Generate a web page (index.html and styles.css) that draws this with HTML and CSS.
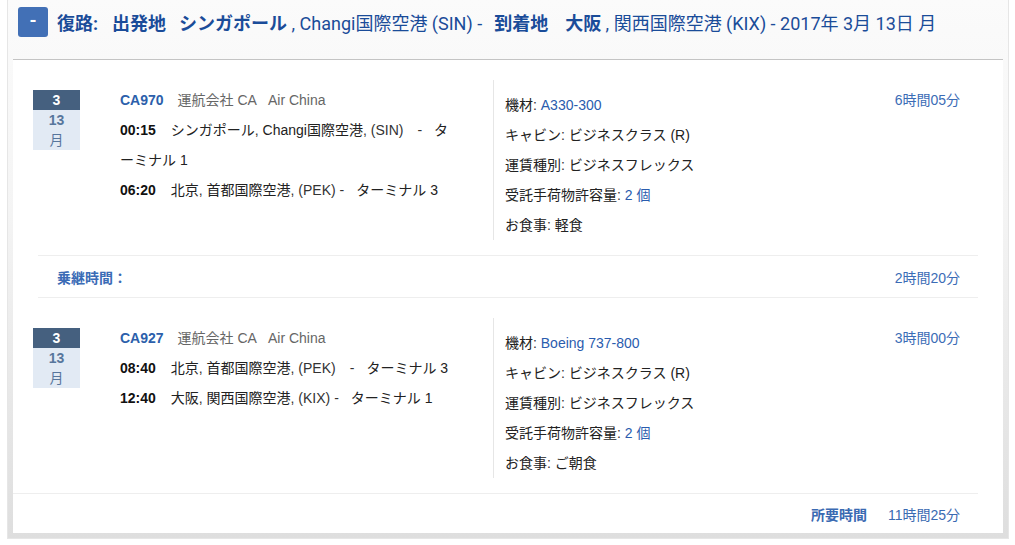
FILE: index.html
```html
<!DOCTYPE html>
<html lang="ja">
<head>
<meta charset="utf-8">
<title>復路</title>
<link rel="stylesheet" href="styles.css">
</head>
<body>
<div class="panel">
  <div class="panel-head">
    <span class="toggle">-</span>
    <h2 class="route"><b class="gap-l">復路:</b><b class="gap-m">出発地</b><b>シンガポール</b> , Changi国際空港 (SIN) -<b class="gap-s">到着地</b><b>大阪</b> , 関西国際空港 (KIX) - 2017年 3月 13日 月</h2>
  </div>
  <div class="panel-body">
    <div class="flight">
      <div class="date"><div class="date-month">3</div><div class="date-day"><b>13</b><br>月</div></div>
      <div class="info">
        <div class="line"><span class="fno">CA970</span><span class="carrier">運航会社 CA</span><span class="carrier">Air China</span></div>
        <div class="line"><span class="time">00:15</span>シンガポール<span class="sep">,</span> Changi国際空港<span class="sep">, (SIN)</span><span class="dash">-</span>ターミナル 1</div>
        <div class="line"><span class="time">06:20</span>北京<span class="sep">,</span> 首都国際空港<span class="sep">, (PEK) -</span><span class="dash-s"></span>ターミナル 3</div>
      </div>
      <div class="details">
        <ul class="specs">
          <li>機材<span class="sep">:</span> <span class="val">A330-300</span></li>
          <li>キャビン<span class="sep">:</span> ビジネスクラス (R)</li>
          <li>運賃種別<span class="sep">:</span> ビジネスフレックス</li>
          <li>受託手荷物許容量<span class="sep">:</span> <span class="val">2 個</span></li>
          <li>お食事<span class="sep">:</span> 軽食</li>
        </ul>
        <div class="dur">6時間05分</div>
      </div>
    </div>

    <div class="layover">
      <span class="layover-label">乗継時間：</span>
      <span class="layover-time">2時間20分</span>
    </div>

    <div class="flight flight-next">
      <div class="date"><div class="date-month">3</div><div class="date-day"><b>13</b><br>月</div></div>
      <div class="info">
        <div class="line"><span class="fno">CA927</span><span class="carrier">運航会社 CA</span><span class="carrier">Air China</span></div>
        <div class="line"><span class="time">08:40</span>北京<span class="sep">,</span> 首都国際空港<span class="sep">, (PEK)</span><span class="dash">-</span>ターミナル 3</div>
        <div class="line"><span class="time">12:40</span>大阪<span class="sep">,</span> 関西国際空港<span class="sep">, (KIX) -</span><span class="dash-s"></span>ターミナル 1</div>
      </div>
      <div class="details">
        <ul class="specs">
          <li>機材<span class="sep">:</span> <span class="val">Boeing 737-800</span></li>
          <li>キャビン<span class="sep">:</span> ビジネスクラス (R)</li>
          <li>運賃種別<span class="sep">:</span> ビジネスフレックス</li>
          <li>受託手荷物許容量<span class="sep">:</span> <span class="val">2 個</span></li>
          <li>お食事<span class="sep">:</span> ご朝食</li>
        </ul>
        <div class="dur">3時間00分</div>
      </div>
    </div>

    <div class="total">
      <span class="total-label">所要時間</span>
      <span class="total-time">11時間25分</span>
    </div>
  </div>
</div>
</body>
</html>
```

FILE: styles.css
```css
html, body {
  margin: 0;
  padding: 0;
  background: #ffffff;
}

body {
  font-family: "Liberation Sans", "Noto Sans CJK JP", sans-serif;
  color: #222222;
}

.panel {
  margin: 0 6px 0 7px;
  border: 1px solid #e6e6e6;
  border-top: none;
  padding: 0 5px 5px;
  background: linear-gradient(to bottom, #fbfbfb 0%, #f4f4f4 40%, #dedede 100%);
}

.panel-head {
  display: flex;
  align-items: center;
  height: 59px;
  padding: 0 0 15px 5px;
  box-sizing: border-box;
}

.toggle {
  flex: none;
  width: 30px;
  height: 30px;
  border-radius: 3px;
  background: #4270b6;
  color: #ffffff;
  font-family: "Roboto", "Liberation Sans", sans-serif;
  font-weight: 700;
  font-size: 18px;
  line-height: 28px;
  text-align: center;
}

.route {
  margin: 0 0 0 9px;
  font-family: "Roboto", "Noto Sans CJK JP", sans-serif;
  font-size: 18px;
  font-weight: 400;
  color: #1a4c99;
  white-space: nowrap;
}

.route b {
  font-weight: 700;
}

.gap-l { margin-right: 14px; }
.gap-m { margin-right: 13px; }
.gap-s { margin: 0 17px 0 12px; }

.panel-body {
  background: #ffffff;
  border-top: 1px solid #c4c4c4;
  padding-top: 20px;
}

.flight {
  display: flex;
  align-items: flex-start;
  padding-left: 20px;
}

.flight-next {
  margin-top: 20px;
}

.date {
  flex: none;
  width: 47px;
  margin-top: 10px;
  text-align: center;
  font-size: 14px;
  line-height: 20px;
}

.date-month {
  background: #45607f;
  color: #ffffff;
  font-weight: 700;
}

.date-day {
  background: #e2eaf4;
  color: #57769c;
}

.info {
  flex: none;
  width: 333px;
  margin-left: 40px;
  padding: 5px 40px 0 0;
  font-size: 14px;
  line-height: 30px;
}

.fno {
  font-weight: 700;
  color: #2c5fab;
  margin-right: 14px;
}

.carrier {
  color: #666666;
  margin-right: 11px;
}

.time {
  font-weight: 700;
  color: #111111;
  margin-right: 15px;
}

.sep {
  color: #333333;
}

.dash {
  margin: 0 12px 0 14px;
  color: #333333;
}

.dash-s {
  margin-left: 12px;
}

.details {
  flex: 1;
  display: flex;
  justify-content: space-between;
  align-items: flex-start;
  border-left: 1px solid #e6e6e6;
  padding: 10px 43px 0 11px;
  min-height: 150px;
}

.specs {
  list-style: none;
  margin: 0;
  padding: 0;
  font-size: 14px;
  line-height: 30px;
}

.val {
  color: #2a5cae;
}

.dur {
  font-size: 14px;
  line-height: 20px;
  color: #3b6cb6;
}

.layover {
  display: flex;
  justify-content: space-between;
  align-items: center;
  margin: 15px 25px 0;
  height: 41px;
  padding: 0 18px 0 19px;
  border-top: 1px solid #eeeeee;
  border-bottom: 1px solid #eeeeee;
  font-size: 14px;
  color: #3b6cb6;
}

.layover-label {
  font-weight: 700;
}

.total {
  display: flex;
  justify-content: flex-end;
  align-items: center;
  margin: 15px 25px 0 0;
  height: 39px;
  padding-right: 18px;
  border-top: 1px solid #eeeeee;
  font-size: 14px;
  color: #3a6ab2;
}

.total-label {
  font-weight: 700;
  margin-right: 21px;
}
```
